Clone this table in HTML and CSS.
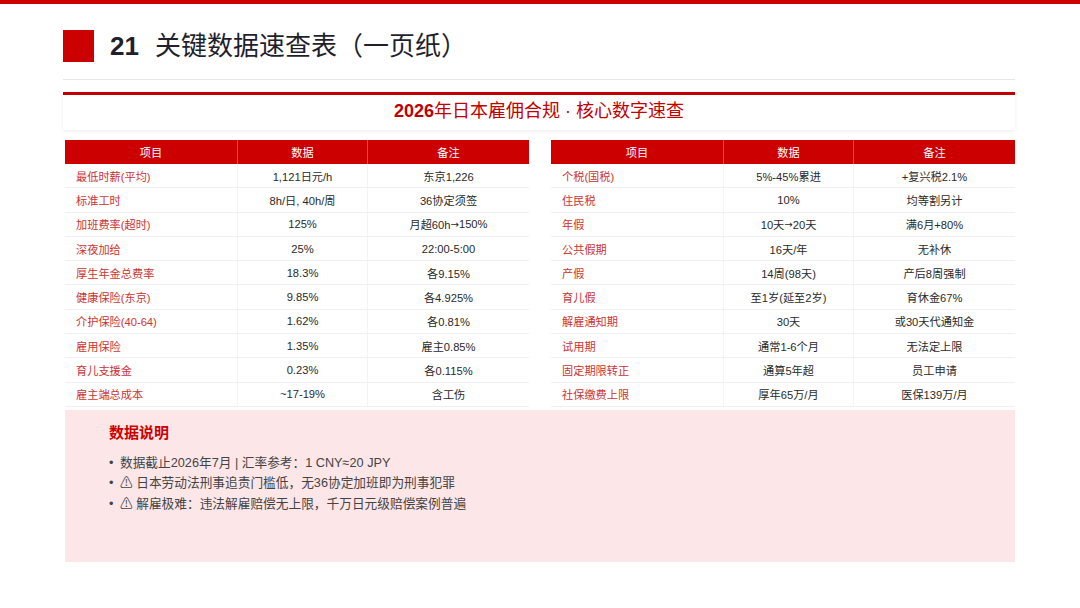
FILE: index.html
```html
<!DOCTYPE html>
<html lang="zh-CN">
<head>
<meta charset="utf-8">
<link rel="stylesheet" href="styles.css">
</head>
<body>
<div class="topbar"></div>
<div class="slide">
  <div class="head">
    <div class="mark"></div>
    <h1 class="title"><b class="num">21</b>关键数据速查表（一页纸）</h1>
  </div>
  <div class="rule"></div>
  <div class="card"><b>2026</b>年日本雇佣合规 · 核心数字速查</div>
  <div class="tables">
    <div class="tbl">
      <div class="row hd"><div>项目</div><div>数据</div><div>备注</div></div>
      <div class="row"><div>最低时薪(平均)</div><div>1,121日元/h</div><div>东京1,226</div></div>
      <div class="row"><div>标准工时</div><div>8h/日, 40h/周</div><div>36协定须签</div></div>
      <div class="row"><div>加班费率(超时)</div><div>125%</div><div>月超60h<span class="arr">→</span>150%</div></div>
      <div class="row"><div>深夜加给</div><div>25%</div><div>22:00-5:00</div></div>
      <div class="row"><div>厚生年金总费率</div><div>18.3%</div><div>各9.15%</div></div>
      <div class="row"><div>健康保险(东京)</div><div>9.85%</div><div>各4.925%</div></div>
      <div class="row"><div>介护保险(40-64)</div><div>1.62%</div><div>各0.81%</div></div>
      <div class="row"><div>雇用保险</div><div>1.35%</div><div>雇主0.85%</div></div>
      <div class="row"><div>育儿支援金</div><div>0.23%</div><div>各0.115%</div></div>
      <div class="row"><div>雇主端总成本</div><div>~17-19%</div><div>含工伤</div></div>
    </div>
    <div class="tbl">
      <div class="row hd"><div>项目</div><div>数据</div><div>备注</div></div>
      <div class="row"><div>个税(国税)</div><div>5%-45%累进</div><div>+复兴税2.1%</div></div>
      <div class="row"><div>住民税</div><div>10%</div><div>均等割另计</div></div>
      <div class="row"><div>年假</div><div>10天<span class="arr">→</span>20天</div><div>满6月+80%</div></div>
      <div class="row"><div>公共假期</div><div>16天/年</div><div>无补休</div></div>
      <div class="row"><div>产假</div><div>14周(98天)</div><div>产后8周强制</div></div>
      <div class="row"><div>育儿假</div><div>至1岁(延至2岁)</div><div>育休金67%</div></div>
      <div class="row"><div>解雇通知期</div><div>30天</div><div>或30天代通知金</div></div>
      <div class="row"><div>试用期</div><div>通常1-6个月</div><div>无法定上限</div></div>
      <div class="row"><div>固定期限转正</div><div>通算5年超</div><div>员工申请</div></div>
      <div class="row"><div>社保缴费上限</div><div>厚年65万/月</div><div>医保139万/月</div></div>
    </div>
  </div>
  <div class="notes">
    <div class="notes-title">数据说明</div>
    <ul class="list">
      <li>数据截止2026年7月 | 汇率参考：1 CNY≈20 JPY</li>
      <li>⚠ 日本劳动法刑事追责门槛低，无36协定加班即为刑事犯罪</li>
      <li>⚠ 解雇极难：违法解雇赔偿无上限，千万日元级赔偿案例普遍</li>
    </ul>
  </div>
</div>
</body>
</html>
```
FILE: styles.css
```css
html, body {
  margin: 0;
  padding: 0;
  background: #ffffff;
}
body {
  width: 1080px;
  height: 608px;
  overflow: hidden;
  font-family: "Liberation Sans", Arial, "Noto Sans CJK SC", sans-serif;
  color: #333333;
}
.topbar {
  height: 4px;
  background: #cc0000;
}
.slide {
  padding: 0 65px 0 63px;
}
.head {
  display: flex;
  align-items: center;
  margin-top: 26px;
  height: 32px;
}
.mark {
  width: 31px;
  height: 32px;
  background: #cc0000;
  flex: none;
}
.title {
  margin: 0 0 0 16px;
  font-size: 26px;
  font-weight: normal;
  color: #1f1f2e;
  line-height: 34px;
  white-space: nowrap;
}
.title .num {
  font-weight: bold;
  margin-right: 16px;
}
.rule {
  margin-top: 17px;
  height: 1px;
  background: #e6e6e6;
}
.card {
  margin-top: 12px;
  border-top: 3px solid #c00000;
  height: 35px;
  line-height: 33px;
  text-align: center;
  color: #c00000;
  font-size: 18px;
  background: #fff;
  box-shadow: 0 1px 4px rgba(0,0,0,0.08);
}
.card b {
  font-weight: bold;
}
.tables {
  display: flex;
  gap: 22px;
  margin: 10px 0 0 2px;
}
.tbl {
  width: 464px;
}
.row {
  display: grid;
  grid-template-columns: 172px 130px 162px;
  height: 24.3px;
  font-size: 11.2px;
  border-bottom: 1px solid #f0f0f0;
  box-sizing: border-box;
}
.row > div {
  display: flex;
  align-items: center;
  justify-content: center;
  color: #2a2a2a;
  border-left: 1px solid #f4f4f4;
  white-space: nowrap;
}
.row > div:first-child {
  justify-content: flex-start;
  padding-left: 11px;
  color: #cc3333;
  border-left: none;
}
.arr {
  font-family: "DejaVu Sans", sans-serif;
  font-size: 10px;
}
.row.hd {
  height: 24px;
  background: #cc0000;
  border-bottom: none;
}
.row.hd > div {
  color: #ffffff;
  justify-content: center;
  padding-left: 0;
  border-left: 1px solid #e24a4a;
}
.row.hd > div:first-child {
  border-left: none;
}
.notes {
  margin: 3px 0 0 2px;
  height: 152px;
  background: #fde6e8;
  padding: 14px 0 0 44px;
  box-sizing: border-box;
}
.notes-title {
  color: #cc0000;
  font-size: 15px;
  font-weight: bold;
  line-height: 18px;
}
.list {
  list-style: none;
  margin: 11px 0 0 0;
  padding: 0;
}
.list li {
  position: relative;
  padding-left: 11px;
  font-size: 12.7px;
  line-height: 20.5px;
  color: #444444;
}
.list li::before {
  content: "•";
  position: absolute;
  left: 0;
  top: 0;
  color: #444444;
}
```
